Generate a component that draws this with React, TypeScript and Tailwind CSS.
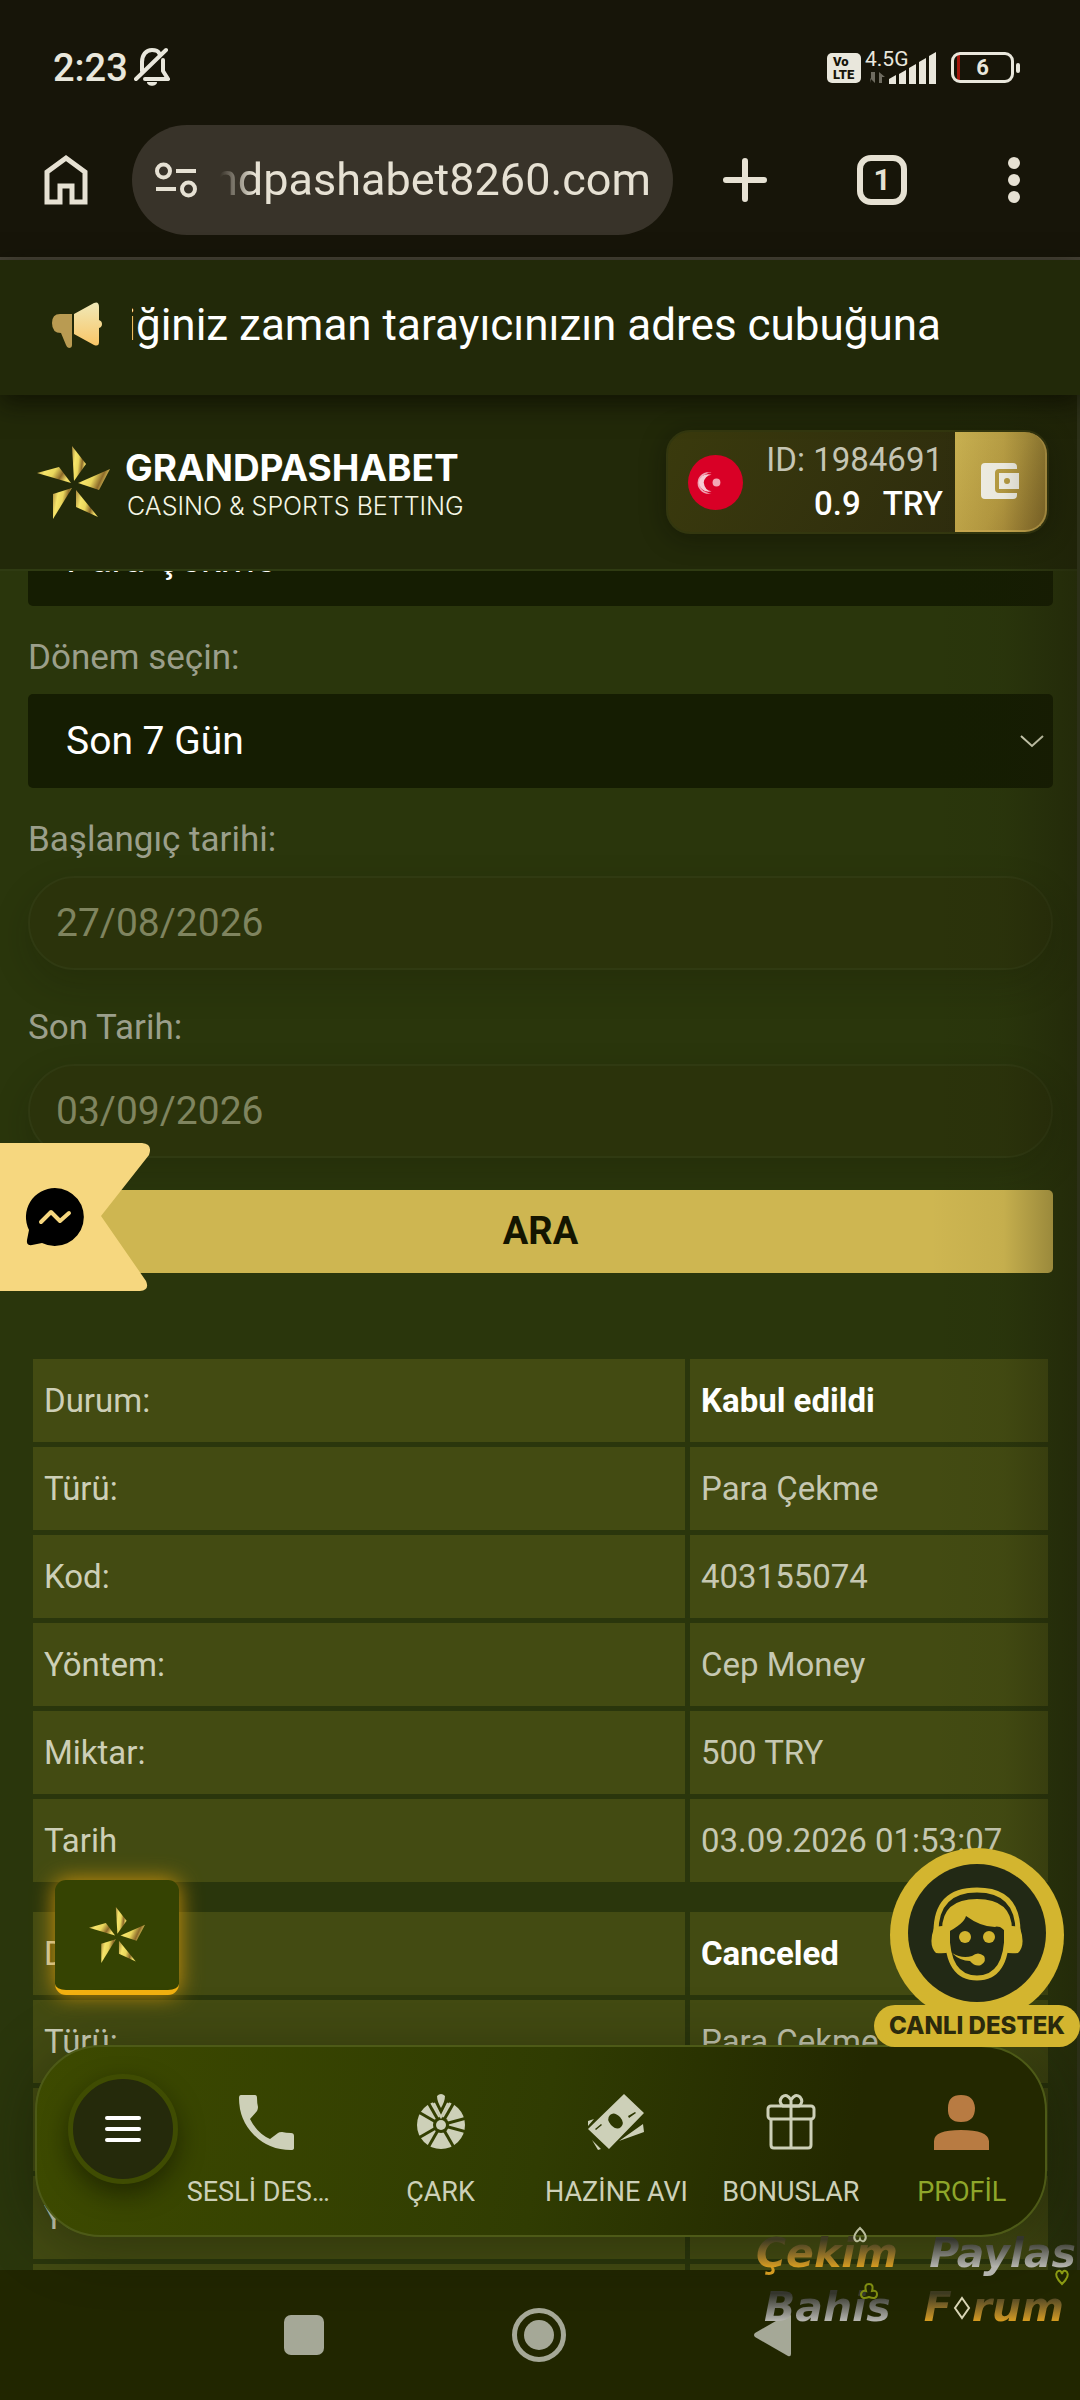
import { useState } from 'react';
import type { ReactNode } from 'react';

const transactions = [
  [
    ['Durum:', 'Kabul edildi'],
    ['Türü:', 'Para Çekme'],
    ['Kod:', '403155074'],
    ['Yöntem:', 'Cep Money'],
    ['Miktar:', '500 TRY'],
    ['Tarih', '03.09.2026 01:53:07'],
  ],
  [
    ['Durum:', 'Canceled'],
    ['Türü:', 'Para Çekme'],
    ['Kod:', '403154992'],
    ['Yöntem:', 'Cep Money'],
    ['Miktar:', '500 TRY'],
  ],
];

function Pinwheel({ id, className }: { id: string; className: string }) {
  return (
    <svg viewBox="0 0 73 73" className={className} aria-hidden="true">
      <defs>
        <linearGradient id={id} x1="0" y1="0" x2="1" y2="0.3">
          <stop offset="0" stopColor="#a8873c" />
          <stop offset="0.3" stopColor="#f6e56a" />
          <stop offset="0.55" stopColor="#e9d65c" />
          <stop offset="0.8" stopColor="#8d6a2a" />
          <stop offset="1" stopColor="#f0dc66" />
        </linearGradient>
      </defs>
      <g fill={`url(#${id})`}>
        <path d="M35 0 49 18 37 35Z" />
        <path d="M0 27 22 21 34 37Z" />
        <path d="M73 23 62 44 41 37Z" />
        <path d="M35 42 16 48V73Z" />
        <path d="M39 44V61L61 71Z" />
      </g>
    </svg>
  );
}

function StatusBar() {
  return (
    <div className="flex h-[125px] items-center justify-between pt-[10px] pr-[60px] pl-[53px] text-[#e9e7dc]">
      <div className="flex items-center gap-[6px]">
        <span className="text-[38px] leading-[44px] font-medium">2:23</span>
        <svg viewBox="0 0 36 40" className="-mt-[2px] h-10 w-9" fill="none" stroke="currentColor" strokeWidth="4">
          <path d="M8 24V15C8 8 12 3 18 3c3 0 6 1 7 3M29 13v11l5 8H11" strokeLinecap="round" strokeLinejoin="round" />
          <path d="M2 32 32 3" strokeLinecap="round" />
          <path d="M13 35h10c0 5-10 5-10 0Z" fill="currentColor" stroke="none" />
        </svg>
      </div>
      <div className="flex items-center">
        <div className="flex h-[30px] w-[34px] flex-col justify-center rounded-[5px] bg-[#e9e7dc] pl-[6px] text-[13px] leading-[13px] font-black text-[#17150a]">
          <span>Vo</span>
          <span>LTE</span>
        </div>
        <svg viewBox="0 0 76 36" className="mb-[2px] ml-1 h-9 w-[76px] overflow-visible" fill="currentColor">
          <text x="0" y="17" fontSize="21" fontFamily="Roboto">4.5G</text>
          <path d="M6 34V23h4v11l-5-5ZM14 34V23l6 5h-3v6Z" fill="#6f6c60" />
          <path d="M24 35v-5l7-4v9ZM34 35V25l7-4v14ZM44 35V19l7-4v20ZM54 35V13l7-4v26ZM64 35V7l7-4v32Z" />
        </svg>
        <div className="ml-[10px] flex h-[31px] w-[63px] items-center justify-center rounded-[9px] border-[3px] border-[#e9e7dc] bg-[linear-gradient(90deg,transparent_3px,#a3160c_3px,#a3160c_6px,transparent_6px)] text-[22px] leading-[24px] font-bold">
          6
        </div>
        <div className="ml-[2px] h-[10px] w-1 rounded-sm bg-[#e9e7dc]" />
      </div>
    </div>
  );
}

function BrowserBar() {
  return (
    <div className="flex h-[135px] items-start border-b-[3px] border-[#464236] text-[#e6e1d3]">
      <button aria-label="Ana sayfa" className="flex h-[110px] w-[132px] items-center justify-center">
        <svg viewBox="0 0 44 52" className="h-[52px] w-11" fill="none" stroke="currentColor" strokeWidth="5">
          <path d="M3 18 22 4l19 14v30H28V32H16v16H3Z" />
        </svg>
      </button>
      <div className="flex h-[110px] min-w-0 flex-1 items-center rounded-full bg-[#383329] pr-[22px] pl-[23px]">
        <svg viewBox="0 0 42 36" className="h-9 w-[42px] shrink-0" fill="none" stroke="currentColor" strokeWidth="4">
          <circle cx="8.500" cy="9" r="6.500" />
          <circle cx="33.500" cy="27" r="6.500" />
          <path d="M21 9h20M1 27h20" />
        </svg>
        <div className="ml-[23px] flex min-w-0 flex-1 justify-end overflow-hidden [mask-image:linear-gradient(90deg,transparent,black_34px)]">
          <span className="text-[45px] leading-[60px] whitespace-nowrap">ndpashabet8260.com</span>
        </div>
      </div>
      <button aria-label="Yeni sekme" className="flex h-[110px] w-[144px] items-center justify-center">
        <svg viewBox="0 0 46 46" className="size-[46px]" stroke="currentColor" strokeWidth="6" strokeLinecap="round">
          <path d="M23 4v38M4 23h38" />
        </svg>
      </button>
      <button aria-label="Sekmeler" className="flex h-[110px] w-[130px] items-center justify-center">
        <span className="flex size-[50px] items-center justify-center rounded-[14px] border-[6px] border-current text-[30px] leading-[34px] font-bold">
          1
        </span>
      </button>
      <button aria-label="Menü" className="flex h-[110px] w-[133px] items-center justify-center">
        <svg viewBox="0 0 12 46" className="h-[46px] w-3" fill="currentColor">
          <circle cx="6" cy="6" r="6" />
          <circle cx="6" cy="23" r="6" />
          <circle cx="6" cy="40" r="6" />
        </svg>
      </button>
    </div>
  );
}

function Announcement() {
  return (
    <div className="relative z-10 flex h-[135px] shrink-0 items-center bg-[#222909] pb-[6px] pl-[52px] shadow-[0_8px_24px_rgba(10,10,0,0.7)]">
      <svg viewBox="0 0 50 46" className="h-[46px] w-[50px] shrink-0" aria-hidden="true">
        <defs>
          <linearGradient id="horn" x1="0" y1="0" x2="0" y2="1">
            <stop offset="0" stopColor="#f0e9b8" />
            <stop offset="1" stopColor="#f9c667" />
          </linearGradient>
        </defs>
        <path d="M20 12v31q0 3-3 3-2 0-3-3L9 31Q0 31 0 21q0-9 8-9Z" fill="#b99b52" />
        <path d="M22 12 42 1q5-2 5 4v13q3 1 3 4t-3 4v14q0 5-5 3L22 32Z" fill="url(#horn)" />
      </svg>
      <div className="ml-[30px] flex w-[809px] min-w-0 justify-end overflow-hidden">
        <span className="text-[44px] leading-[60px] whitespace-nowrap text-white">
          istediğiniz zaman tarayıcınızın adres cubuğuna
        </span>
      </div>
    </div>
  );
}

function Header() {
  return (
    <header className="flex h-44 shrink-0 items-center justify-between border-b-2 border-[#2f3b12] bg-[#222909] pr-[31px] pl-[37px]">
      <a href="#" className="flex items-center gap-[15px] text-white">
        <Pinwheel id="logo-gold" className="size-[73px]" />
        <span className="flex flex-col pt-[8px] font-[Inter]">
          <span className="text-[37px] leading-[40px] font-bold">GRANDPASHABET</span>
          <span className="pl-[2px] text-[25px] leading-[36px] font-light text-[#f4f5e4]">CASINO &amp; SPORTS BETTING</span>
        </span>
      </a>
      <div className="flex h-[104px] items-center rounded-3xl border-2 border-[#33370f] bg-[linear-gradient(120deg,#3a3a0d,#2b290e)] shadow-[0_4px_26px_rgba(10,10,0,0.4)]">
        <svg viewBox="0 0 56 56" className="ml-5 size-[55px]" aria-label="Türkçe">
          <circle cx="28" cy="28" r="28" fill="#d90026" />
          <path d="M24 18a11 11 0 1 0 0 21 8 8 0 0 1-5-1 10 10 0 0 1 0-19 8 8 0 0 1 5-1Z" fill="#f0a0b0" />
          <path d="M24 20q-11-2-13 8 2 11 13 9-7-1-8-9 1-7 8-8Z" fill="#f6ccd4" />
          <circle cx="29" cy="28" r="4" fill="#f3a7b4" />
        </svg>
        <div className="ml-[23px] flex flex-col items-end pr-3 text-[33px] leading-[44px]">
          <span className="text-[#c5c5b4]">ID: 1984691</span>
          <span className="flex gap-[22px] font-medium text-white">
            <span>0.9</span>
            <span>TRY</span>
          </span>
        </div>
        <button
          aria-label="Cüzdan"
          className="flex h-[100px] w-[92px] items-center justify-center rounded-r-[22px] border-r-2 border-b-2 border-[#c9a84f] bg-[linear-gradient(115deg,#cbb352,#b89c42_55%,#94762f)]"
        >
          <svg viewBox="0 0 38 36" className="h-9 w-[38px]" aria-hidden="true">
            <path
              fill="#f4f2e8"
              fillRule="evenodd"
              d="M4 0h28q4 0 4 4v2H18q-4 0-4 4v16q0 4 4 4h18v2q0 4-4 4H4q-4 0-4-4V4q0-4 4-4Zm14 10h20v16H18Zm8 5a3 3 0 1 0 0 6 3 3 0 0 0 0-6Z"
            />
          </svg>
        </button>
      </div>
    </header>
  );
}

function SelectBox({ id, value }: { id: string; value: string }) {
  return (
    <div className="relative">
      <select
        id={id}
        aria-label={value}
        defaultValue={value}
        className="block h-[94px] w-full appearance-none rounded-[5px] bg-[#151d02] px-[38px] text-[39px] text-white"
      >
        <option>{value}</option>
      </select>
      <svg viewBox="0 0 24 14" className="pointer-events-none absolute top-10 right-[9px] h-[14px] w-6" fill="none" stroke="#dfe0c4" strokeWidth="2">
        <path d="m1 2 11 10L23 2" />
      </svg>
    </div>
  );
}

function FieldLabel({ htmlFor, children }: { htmlFor: string; children: ReactNode }) {
  return (
    <label htmlFor={htmlFor} className="mt-8 mb-4 block text-[35px] leading-[40px] text-[#9b9f8b]">
      {children}
    </label>
  );
}

function DateField({ id, label, initial }: { id: string; label: string; initial: string }) {
  const [value, setValue] = useState(initial);
  return (
    <div>
      <FieldLabel htmlFor={id}>{label}</FieldLabel>
      <input
        id={id}
        type="text"
        value={value}
        onChange={(e) => setValue(e.target.value)}
        className="block h-[94px] w-full rounded-full border-2 border-[#303a12] bg-[#2b330b] px-[26px] text-[39px] text-[#7f845f] shadow-[0_14px_36px_rgba(20,20,0,0.2)]"
      />
    </div>
  );
}

function TransactionTable({ rows }: { rows: string[][] }) {
  return (
    <table className="w-full table-fixed border-separate border-spacing-[5px] text-[33px] leading-[40px]">
      <colgroup>
        <col className="w-[652px]" />
        <col />
      </colgroup>
      <tbody>
        {rows.map(([label, value], index) => (
          <tr key={label} className="h-[83px]">
            <td className="bg-[#434b12] p-0 pl-[11px] text-[#cdcfb7]">{label}</td>
            <td
              className={
                index === 0
                  ? 'bg-[#434b12] p-0 pl-[11px] font-bold text-white'
                  : 'bg-[#434b12] p-0 pl-[11px] text-[#c6c8b2]'
              }
            >
              {value}
            </td>
          </tr>
        ))}
      </tbody>
    </table>
  );
}

function WheelIcon() {
  const spokes = [30, 75, 105, 150, 210, 240, 300, 330];
  return (
    <svg viewBox="0 0 48 56" className="h-14 w-12" aria-hidden="true">
      <circle cx="24" cy="31" r="24" fill="#cdd0b8" />
      <g stroke="#333f02" strokeWidth="3">
        {spokes.map((angle) => (
          <path key={angle} d="M24 31V6" transform={`rotate(${angle} 24 31)`} />
        ))}
      </g>
      <circle cx="24" cy="31" r="8" fill="#333f02" />
      <circle cx="24" cy="31" r="5" fill="#cdd0b8" />
      <path d="M14 4h20L24 25Z" fill="#333f02" />
      <path d="m17 9 7 14 7-14" fill="none" stroke="#cdd0b8" strokeWidth="2" />
      <path d="M20 2q4-4 8 0 0 5-4 12-4-7-4-12Z" fill="#cdd0b8" />
    </svg>
  );
}

const navItems = [
  {
    label: 'SESLİ DESTEK',
    icon: (
      <svg viewBox="-12 0 67 55" className="h-[55px] w-[67px]" fill="#cdd0b8">
        <path d="M2 0h14q2 0 2 3 0 5 1 9 0 2-1 4l-7 8q7 14 20 20l8-6q1-1 4-1 4 1 9 1 3 0 3 3v12q0 2-3 2Q30 55 15 40 0 25 0 3q0-3 2-3Z" />
      </svg>
    ),
  },
  { label: 'ÇARK', icon: <WheelIcon /> },
  {
    label: 'HAZİNE AVI',
    icon: (
      <svg viewBox="0 0 56 56" className="size-14" fill="#cdd0b8">
        <path d="M0 27l6-2-6 7ZM4 46l9 9-3 1ZM31 47 55 30l1 8Z" />
        <path fillRule="evenodd" d="M36 0 56 19 21 55 0 35Zm-14 21q-4 4 1 10 6 6 10 2t-1-10q-6-6-10-2ZM8 36l6-5-1-1-6 5Zm33-12 7-5-1-1-7 4Z" />
      </svg>
    ),
  },
  {
    label: 'BONUSLAR',
    icon: (
      <svg viewBox="0 0 50 56" className="h-14 w-[50px]" fill="none" stroke="#cdd0b8" strokeWidth="3">
        <rect x="2" y="12" width="46" height="13" rx="3" />
        <path d="M5 25v26q0 3 3 3h34q3 0 3-3V25M25 12v42" />
        <path d="M25 12H17q-5-4-1-9 5-4 9 3v6h8q5-4 1-9-5-4-9 3" />
      </svg>
    ),
  },
  {
    label: 'PROFİL',
    active: true,
    icon: (
      <svg viewBox="0 0 55 55" className="size-[55px]" fill="#b87b42">
        <path d="M14 13Q14 0 27 0t14 13q0 14-14 14T14 13ZM0 55v-9q0-11 27-11t28 11v9Z" />
      </svg>
    ),
  },
];

function BottomNav() {
  return (
    <nav className="absolute right-[33px] bottom-[33px] left-[35px] flex h-[192px] rounded-[66px] border-2 border-[#4d5a17] bg-[linear-gradient(100deg,#3d4a00,#303c02_50%,#232800_80%)] shadow-[0_8px_60px_rgba(15,18,0,0.4)]">
      <div className="flex w-[133px] shrink-0 items-start pt-[27px] pl-[31px]">
        <button
          aria-label="Menü"
          className="flex size-[110px] shrink-0 items-center justify-center rounded-full border-[5px] border-[#3f4c02] bg-[#252a0b] shadow-[0_10px_24px_rgba(10,12,0,0.5)]"
        >
          <span className="flex w-9 flex-col gap-[7px]">
            <span className="h-1 rounded-full bg-white" />
            <span className="h-1 rounded-full bg-white" />
            <span className="h-1 rounded-full bg-white" />
          </span>
        </button>
      </div>
      <div className="grid min-w-0 flex-1 grid-cols-[182fr_179fr_174fr_176fr_167fr]">
        {navItems.map((item) => (
          <a key={item.label} href="#" className="flex min-w-0 flex-col items-center pt-[47px]">
            <span className="flex h-14 items-center">{item.icon}</span>
            <span
              className={
                item.active
                  ? 'mt-[26px] text-[27px] leading-[32px] whitespace-nowrap text-[#8fa62a]'
                  : 'mt-[26px] max-w-[148px] truncate text-[27px] leading-[32px] text-[#cdd0b8]'
              }
            >
              {item.label}
            </span>
          </a>
        ))}
      </div>
    </nav>
  );
}

function LiveSupport() {
  return (
    <button aria-label="Canlı destek" className="absolute right-0 bottom-[223px] flex flex-col items-center">
      <svg viewBox="0 0 174 174" className="-mb-[17px] size-[174px]" aria-hidden="true">
        <circle cx="87" cy="87" r="87" fill="#d3b52f" />
        <circle cx="87" cy="85" r="69" fill="#222915" />
        <path d="M46 84Q46 42 87 42t41 42" fill="none" stroke="#d3b52f" strokeWidth="5" />
        <path d="M52 82Q52 51 87 51t35 31l-6 2q-4-4-6-5-4-1-5 0-14 0-29-11-2 8-20 17Z" fill="#d3b52f" />
        <path d="M57 84q0 46 30 46t30-46" fill="none" stroke="#d3b52f" strokeWidth="5" />
        <path d="M44 80q8-4 16 0v24q-6 2-14 1-8-8-2-25ZM130 80q-8-4-16 0v24q6 2 14 1 8-8 2-25Z" fill="#d3b52f" />
        <circle cx="75" cy="89" r="6" fill="#d3b52f" />
        <circle cx="99" cy="89" r="6" fill="#d3b52f" />
        <path d="M62 105q10 6 20 3 6-5 12 0 3 5-3 9-6 2-11-4-10 0-18-8Z" fill="#d3b52f" />
      </svg>
      <span className="relative rounded-full bg-[#d3b52f] px-[15px] py-1 font-[Inter] text-[24px] leading-[34px] font-extrabold whitespace-nowrap text-[#2b2a0c]">
        CANLI DESTEK
      </span>
    </button>
  );
}

function Watermark() {
  const gold = 'bg-linear-to-b from-[#3d3a20] from-25% to-[#d39a20] to-75% bg-clip-text text-transparent';
  const silver = 'bg-linear-to-b from-[#34352c] from-25% to-[#b4b4ae] to-75% bg-clip-text text-transparent';
  return (
    <div className="pointer-events-none absolute right-0 bottom-[66px] flex w-[330px] flex-col font-['DejaVu_Sans'] text-[41px] leading-[54px] font-bold italic">
      <svg viewBox="0 0 330 108" className="absolute top-0 left-0 h-[108px] w-[330px]" fill="none" strokeWidth="2">
        <path d="M110 2q-9 9-4 13 3 1 4-2 1 3 4 2 5-4-4-13Z" stroke="#b9bc9c" />
        <path d="M312 58q-8-8-5-12 4-3 5 2 1-5 5-2 3 4-5 12Z" stroke="#8a9a12" />
        <path d="M119 71q-8 3-8-3 1-4 5-3-2-7 3-7t3 7q5-1 5 3 0 6-8 3Z" stroke="#7f8d10" />
        <path d="m212 72 7 10-7 10-7-10Z" stroke="#d8d5b4" />
      </svg>
      <div className="flex justify-between pr-1 pl-[6px]">
        <span className={gold}>Çekim</span>
        <span className={silver}>Paylas</span>
      </div>
      <div className="flex justify-between pr-4 pl-[14px]">
        <span className={silver}>Bahis</span>
        <span className="flex gap-[20px]">
          <span className={gold}>F</span>
          <span className={gold}>rum</span>
        </span>
      </div>
    </div>
  );
}

function SystemNav() {
  return (
    <div className="flex h-[130px] shrink-0 items-center justify-center gap-[188px] bg-[#212600] pr-1 text-[#a5a897]">
      <button aria-label="Son uygulamalar" className="size-10 rounded-[7px] bg-current" />
      <button aria-label="Ana ekran" className="flex size-[54px] items-center justify-center rounded-full border-[5px] border-current">
        <span className="size-[30px] rounded-full bg-current" />
      </button>
      <button aria-label="Geri">
        <svg viewBox="0 0 38 44" className="h-11 w-[38px]" fill="currentColor">
          <path d="M1 20 34 1q3-1 3 2v38q0 3-3 2L1 24q-2-2 0-4Z" />
        </svg>
      </button>
    </div>
  );
}

export default function App() {
  return (
    <div className="relative flex h-screen flex-col overflow-hidden bg-[#171509] font-[Roboto,sans-serif]">
      <StatusBar />
      <BrowserBar />
      <div className="relative flex min-h-0 flex-1 flex-col bg-[#2a360c]">
        <Announcement />
        <Header />
        <main className="min-h-0 flex-1 overflow-hidden pr-[27px] pl-7">
          <div className="flex h-[35px] flex-col justify-end overflow-hidden">
            <SelectBox id="islem" value="Para Çekme" />
          </div>
          <form onSubmit={(e) => e.preventDefault()}>
            <FieldLabel htmlFor="donem">Dönem seçin:</FieldLabel>
            <SelectBox id="donem" value="Son 7 Gün" />
            <div className="flex flex-col gap-[6px]">
              <DateField id="baslangic" label="Başlangıç tarihi:" initial="27/08/2026" />
              <DateField id="son" label="Son Tarih:" initial="03/09/2026" />
            </div>
            <button type="submit" className="relative mt-8 block h-[83px] w-full rounded-[5px] bg-[#ceb651] text-[38px] font-bold text-[#141500]">
              ARA
            </button>
          </form>
          <div className="mt-[81px] flex flex-col gap-5">
            {transactions.map((rows) => (
              <TransactionTable key={rows[0][1]} rows={rows} />
            ))}
          </div>
        </main>

        {/* shaded scrollbar edge */}
        <div className="pointer-events-none absolute inset-y-0 right-0 w-[150px] border-r-[3px] border-[#2c3018] bg-linear-to-r from-transparent via-[#1a1a06]/5 to-[#1a1a06]/40" />

        <button aria-label="Messenger" className="absolute top-[883px] left-0">
          <svg viewBox="0 0 151 148" className="h-[148px] w-[151px]">
            <path d="M0 0h142q11 1 7 12L101 73l45 65q4 9-6 10H0Z" fill="#f6d77f" />
            <path d="M55 45a29 29 0 1 1-13 55l-10 2q-6 1-5-5l2-10A29 29 0 0 1 55 45Z" fill="#000" />
            <path d="m41 79 10-10 9 9 9-8" fill="none" stroke="#f6d77f" strokeWidth="4" strokeLinecap="round" strokeLinejoin="round" />
          </svg>
        </button>
        <button
          aria-label="Promosyonlar"
          className="absolute bottom-[275px] left-[55px] flex h-[115px] w-[124px] items-center justify-center rounded-[11px] border-b-[5px] border-[#f2b010] bg-[#354302] shadow-[0_0_22px_rgba(230,160,10,0.85)]"
        >
          <Pinwheel id="promo-gold" className="size-14" />
        </button>
        <BottomNav />
        <LiveSupport />
      </div>
      <SystemNav />
      <Watermark />
    </div>
  );
}
